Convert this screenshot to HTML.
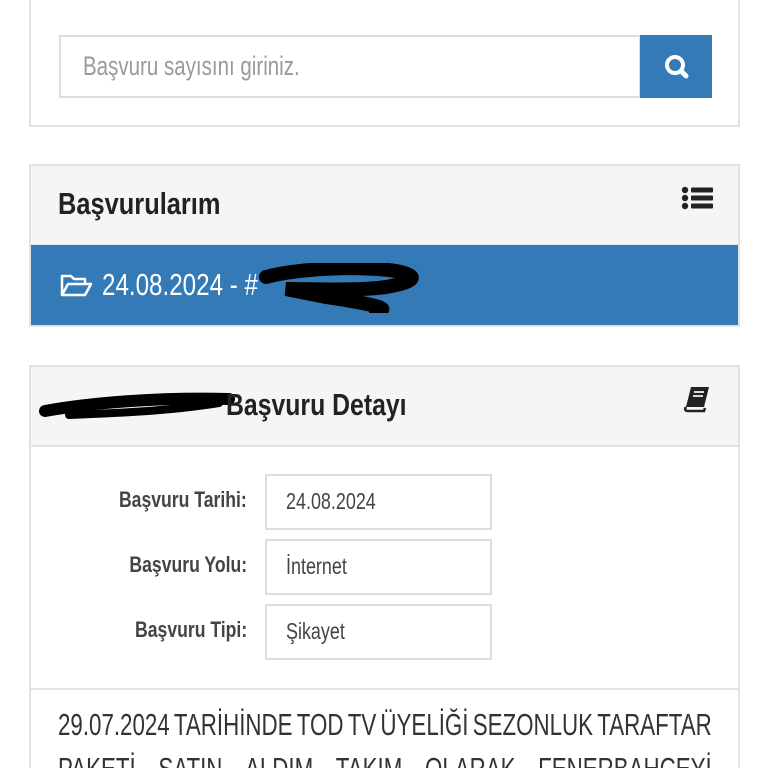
<!DOCTYPE html>
<html><head><meta charset="utf-8"><style>
*{margin:0;padding:0;box-sizing:border-box}
html,body{width:768px;height:768px;overflow:hidden}
body{background:#fff;font-family:"Liberation Sans",sans-serif;color:#333;position:relative}
.p{position:absolute;left:29px;width:711px;border:2px solid #e2e2e2;background:#fff}
.hd{background:#f5f5f5;border-bottom:2px solid #e2e2e2;position:relative}
.ab{position:absolute;white-space:nowrap}
.c{transform:scaleX(.78);transform-origin:left top}
.lbl{position:absolute;right:491px;font-size:22px;font-weight:bold;color:#444;text-align:right;transform:scaleX(.8);transform-origin:right top;white-space:nowrap}
.in{position:absolute;left:234px;width:227px;height:56px;border:2px solid #ddd;color:#444;padding:12px 0 0 19px}
.in span{display:inline-block;font-size:23px;transform:scaleX(.78);transform-origin:left top}
.ln{position:absolute;left:27px;width:908px;font-size:31px;color:#333;display:flex;justify-content:space-between;transform:scaleX(.72);transform-origin:left top;white-space:nowrap}
</style></head><body>
<div class="p" style="top:-4px;height:131px">
  <div class="ab" style="left:28px;top:37px;width:582px;height:63px;border:2px solid #ddd;color:#999;padding:14px 0 0 22px"><div class="c" style="font-size:27px;transform:scaleX(.76)">Başvuru sayısını giriniz.</div></div>
  <div class="ab" style="left:609px;top:37px;width:72px;height:63px;background:#337ab7">
    <svg width="72" height="63" viewBox="0 0 72 63"><circle cx="35" cy="30" r="8" fill="none" stroke="#fff" stroke-width="4"/><line x1="41" y1="36" x2="46" y2="41" stroke="#fff" stroke-width="5" stroke-linecap="round"/></svg>
  </div>
</div>
<div class="p" style="top:164px;height:163px">
  <div class="hd" style="height:80px">
    <div class="ab c" style="left:27px;top:20px;font-size:31px;font-weight:bold;color:#222;transform:scaleX(.82)">Başvurularım</div>
    <svg class="ab" style="left:650px;top:20px" width="32" height="24" viewBox="0 0 32 24"><g fill="#222"><circle cx="4" cy="4" r="3.2"/><circle cx="4" cy="12" r="3.2"/><circle cx="4" cy="20" r="3.2"/><rect x="10" y="1.5" width="22" height="5" rx="1"/><rect x="10" y="9.5" width="22" height="5" rx="1"/><rect x="10" y="17.5" width="22" height="5" rx="1"/></g></svg>
  </div>
  <div class="ab" style="left:0;top:79px;width:707px;height:80px;background:#337ab7">
    <svg class="ab" style="left:29px;top:28px" width="33" height="24" viewBox="0 0 33 24"><path d="M2 22V3h9l3 3h11v5M2 22l6-11h23l-6 11z" fill="none" stroke="#fff" stroke-width="2.5" stroke-linejoin="round"/></svg>
    <div class="ab c" style="left:71px;top:22px;font-size:31px;color:#fff">24.08.2024 - #</div>
    <svg class="ab" style="left:225px;top:18px" width="170" height="50" viewBox="0 0 170 50"><path d="M10 14 C40 6 100 2 140 8 C160 12 165 18 130 24 C100 28 60 26 30 26 L70 34 C110 40 140 46 120 48" fill="none" stroke="#000" stroke-width="14" stroke-linecap="round"/></svg>
  </div>
</div>
<div class="p" style="top:365px;height:420px">
  <div class="hd" style="height:80px">
    <svg class="ab" style="left:8px;top:22px" width="200" height="32" viewBox="0 0 200 32"><path d="M6 22 C50 14 120 8 190 10" stroke="#000" stroke-width="12" fill="none" stroke-linecap="round"/><path d="M30 26 C80 24 130 22 180 14" stroke="#000" stroke-width="8" fill="none" stroke-linecap="round"/></svg>
    <div class="ab c" style="left:195px;top:20px;font-size:31px;font-weight:bold;color:#222;transform:scaleX(.8)">Başvuru Detayı</div>
    <svg class="ab" style="left:652px;top:18px" width="28" height="28" viewBox="0 0 28 28"><path d="M8 2h18l-5 20H3z" fill="#222"/><path d="M3 22c-2 3 0 4 2 4h16l1-3" fill="none" stroke="#222" stroke-width="2.5"/><path d="M11 7h10M10 11h10" stroke="#f5f5f5" stroke-width="1.8"/></svg>
  </div>
  <div class="lbl" style="top:120px">Başvuru Tarihi:</div>
  <div class="in" style="top:107px"><span>24.08.2024</span></div>
  <div class="lbl" style="top:185px">Başvuru Yolu:</div>
  <div class="in" style="top:172px"><span>İnternet</span></div>
  <div class="lbl" style="top:250px">Başvuru Tipi:</div>
  <div class="in" style="top:237px"><span>Şikayet</span></div>
  <div class="ab" style="left:0;top:321px;width:707px;border-top:2px solid #e2e2e2"></div>
  <div class="ln" style="top:340px"><span>29.07.2024</span><span>TARİHİNDE</span><span>TOD</span><span>TV</span><span>ÜYELİĞİ</span><span>SEZONLUK</span><span>TARAFTAR</span></div>
  <div class="ln" style="top:384px"><span>PAKETİ</span><span>SATIN</span><span>ALDIM</span><span>TAKIM</span><span>OLARAK</span><span>FENERBAHÇEYİ</span></div>
</div>
</body></html>
